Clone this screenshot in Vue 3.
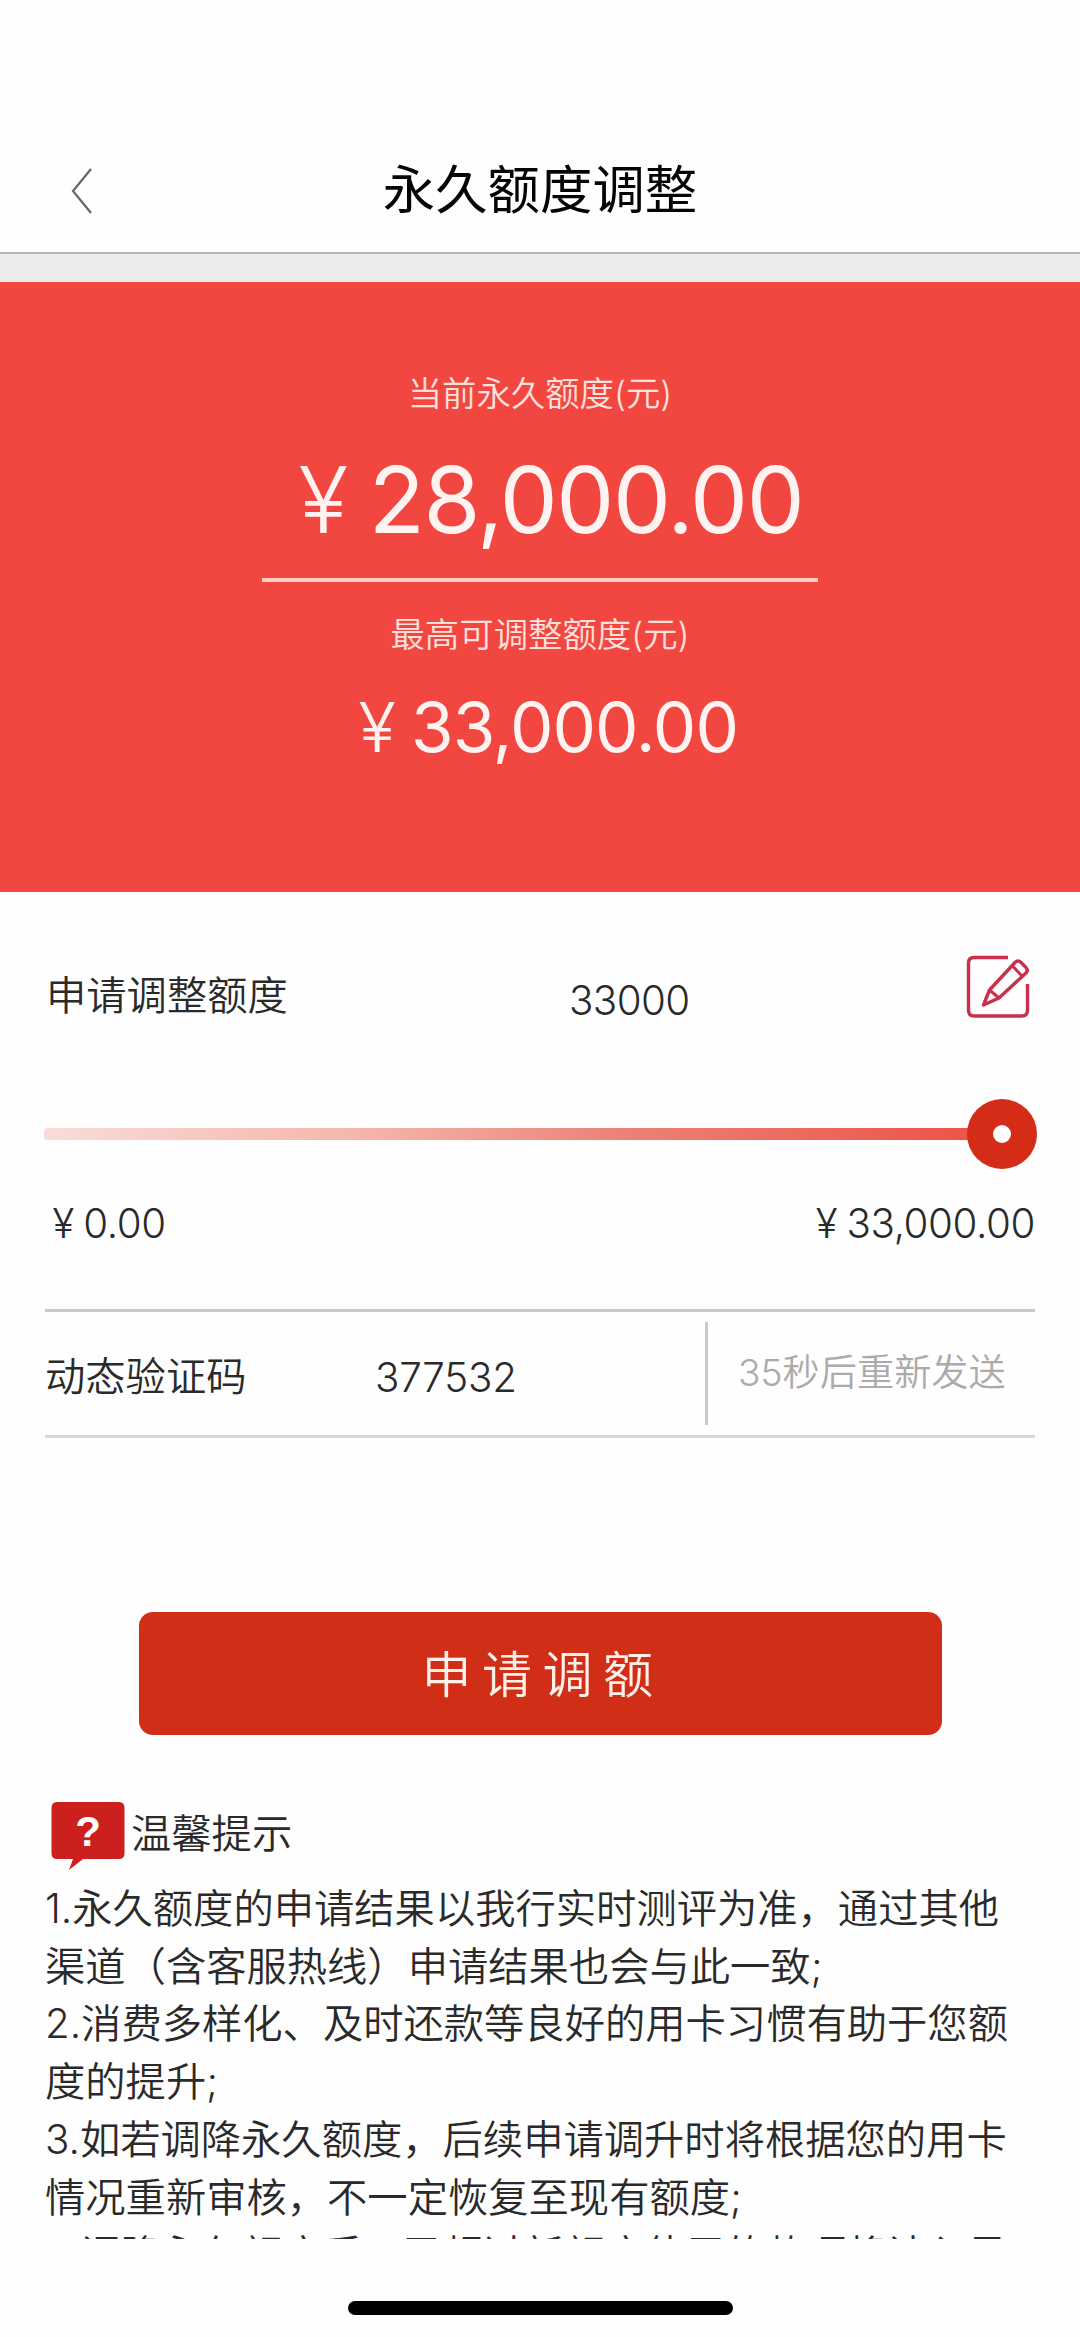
<script setup>
import { ref, computed } from 'vue'

const maxLimit = 33000
const applied = ref(33000)
const code = ref('377532')
const progress = computed(() => (applied.value / maxLimit) * 100 + '%')

const tips = [
  '1.永久额度的申请结果以我行实时测评为准，通过其他',
  '渠道（含客服热线）申请结果也会与此一致;',
  '2.消费多样化、及时还款等良好的用卡习惯有助于您额',
  '度的提升;',
  '3.如若调降永久额度，后续申请调升时将根据您的用卡',
  '情况重新审核，不一定恢复至现有额度;',
  '4.调降永久额度后，已超过新额度使用的款项将计入最',
]
</script>

<template>
  <div class="page">
    <header class="nav">
      <svg class="back" width="24" height="50" viewBox="0 0 24 50">
        <path d="M21 3 L3 25 L21 47" fill="none" stroke="#666" stroke-width="2.2" />
      </svg>
      <h1>永久额度调整</h1>
    </header>
    <div class="gap"></div>

    <section class="hero">
      <div class="label">当前永久额度(元)</div>
      <div class="amount big"><span class="yen">¥</span>28,000.00</div>
      <div class="rule"></div>
      <div class="label">最高可调整额度(元)</div>
      <div class="amount mid"><span class="yen">¥</span>33,000.00</div>
    </section>

    <main class="form">
      <div class="apply">
        <span class="name">申请调整额度</span>
        <span class="value">{{ applied }}</span>
        <svg class="edit" width="66" height="66" viewBox="0 0 66 66" fill="none" stroke="#c9304c" stroke-width="3.4" stroke-linejoin="round">
          <path d="M43 3.5 H9 Q3.500 3.500 3.500 9 V56 Q3.500 62 9 62 H57 Q62.500 62 62.500 56 V30" />
          <path d="M18.500 51 L24.500 36 L50 8.500 Q53 5.500 56 8.500 L61 13.500 Q63.500 16.500 61 19 L34 44 Z" />
          <path d="M47.500 12 L57 22 M24.500 36 L34 44" stroke-width="3" />
        </svg>
      </div>

      <div class="slider">
        <div class="track"><div class="fill" :style="{ width: progress }"></div></div>
        <div class="knob"><i></i></div>
      </div>
      <div class="range">
        <span><span class="yen">¥</span>0.00</span>
        <span><span class="yen">¥</span>33,000.00</span>
      </div>

      <div class="verify">
        <span class="name">动态验证码</span>
        <span class="code">{{ code }}</span>
        <span class="resend">35秒后重新发送</span>
      </div>

      <button class="submit">申请调额</button>
    </main>

    <section class="tips">
      <div class="tips-head">
        <svg width="76" height="72" viewBox="0 0 76 72">
          <path d="M7 1 H69 Q74.500 1 74.500 7 V52 Q74.500 58 69 58 H33 L19 69 L23 58 H7 Q1.500 58 1.500 52 V7 Q1.500 1 7 1 Z" fill="#cc201f" />
          <text x="38" y="45" text-anchor="middle" font-family="Liberation Sans, Arial, sans-serif" font-weight="700" font-size="42" fill="#fff">?</text>
        </svg>
        <span>温馨提示</span>
      </div>
      <div class="tips-body">
        <p v-for="t in tips" :key="t">{{ t }}</p>
      </div>
    </section>

    <div class="home"></div>
  </div>
</template>

<style>
body {
  margin: 0;
  background: #fefefe;
}
</style>

<style scoped>
.page {
  width: 1080px;
  height: 2337px;
  overflow: hidden;
  background: #fefefe;
  color: #2a2a2a;
  font-family: Inter, "Noto Sans CJK SC", sans-serif;
  font-size: 40.3px;
  font-weight: 350;
  display: flex;
  flex-direction: column;
}
.nav {
  box-sizing: border-box;
  height: 254px;
  padding: 122px 0 0 70px;
  border-bottom: 2px solid #b8b8b8;
  display: flex;
  align-items: center;
  flex-shrink: 0;
}
.back {
  margin-top: 8px;
}
h1 {
  flex: 1;
  margin: 6px 94px 0 0;
  text-align: center;
  font-size: 52.4px;
  font-weight: 400;
  line-height: 70px;
  color: #050505;
}
.gap {
  height: 28px;
  background: #ebebec;
}
.hero {
  box-sizing: border-box;
  height: 610px;
  padding-top: 90px;
  background: #f24741;
  color: #fff3f1;
  display: flex;
  flex-direction: column;
  align-items: center;
}
.label {
  font-size: 34.4px;
  line-height: 44px;
  color: #ffe0dc;
}
.yen {
  display: inline-block;
  width: 1em;
  text-align: center;
}
.amount {
  font-weight: 400;
}
.amount .yen {
  font-weight: 350;
}
.big {
  margin-top: 36px;
  font-size: 92px;
  line-height: 96px;
  letter-spacing: -1.4px;
}
.rule {
  width: 556px;
  height: 4px;
  margin: 30px 0 31px;
  background: #ffcfc4;
}
.mid {
  margin-top: 35px;
  font-size: 69px;
  line-height: 70px;
  letter-spacing: -1px;
}
.form {
  padding: 62px 45px 0 44px;
}
.apply {
  display: flex;
  align-items: flex-start;
  height: 145px;
}
.apply .name {
  width: 525px;
  padding-left: 2px;
  box-sizing: border-box;
  line-height: 84px;
}
.value {
  flex: 1;
  line-height: 94px;
  letter-spacing: -0.6px;
}
.edit {
  margin-right: 4px;
}
.slider {
  display: flex;
  align-items: center;
  height: 70px;
}
.track {
  flex: 1;
  height: 12px;
}
.fill {
  height: 100%;
  border-radius: 4px 0 0 4px;
  background: linear-gradient(90deg, #f9dcd9 0%, #f4b5a9 35%, #ec8278 62%, #ec5547 100%);
}
.knob {
  width: 70px;
  height: 70px;
  margin: 0 -2px 0 -1px;
  border-radius: 50%;
  background: #d42c17;
  display: flex;
  align-items: center;
  justify-content: center;
}
.knob i {
  width: 18px;
  height: 18px;
  border-radius: 50%;
  background: #fff;
}
.range {
  display: flex;
  justify-content: space-between;
  margin: 33px 0 0 -1px;
  line-height: 44px;
  letter-spacing: -0.4px;
}
.verify {
  box-sizing: border-box;
  height: 129px;
  margin: 63px 0 0 1px;
  border-top: 3px solid #cacaca;
  border-bottom: 3px solid #d8d8d8;
  display: flex;
  align-items: center;
}
.verify .name {
  width: 330px;
}
.code {
  flex: 1;
  padding-top: 7px;
  letter-spacing: -0.2px;
}
.resend {
  box-sizing: border-box;
  width: 330px;
  height: 103px;
  padding-left: 30px;
  border-left: 3px solid #cacaca;
  font-size: 37.2px;
  line-height: 102px;
  color: #adaaaa;
}
.submit {
  display: block;
  width: 803px;
  height: 123px;
  margin: 174px 0 0 95px;
  padding: 0 0 5px 4px;
  border: 0;
  border-radius: 14px;
  background: #d12e18;
  color: #fff0e8;
  font: inherit;
  font-size: 50px;
  letter-spacing: 10.5px;
}
.tips {
  height: 438px;
  margin-top: 66px;
  padding-left: 45px;
  overflow: hidden;
}
.tips-head {
  display: flex;
  height: 79px;
  padding-left: 5px;
  gap: 5px;
  line-height: 65px;
}
.tips-body p {
  margin: 0;
  white-space: nowrap;
  line-height: 57.7px;
}
.home {
  width: 385px;
  height: 14px;
  margin: 62px auto 0;
  border-radius: 7px;
  background: #000;
}
</style>
